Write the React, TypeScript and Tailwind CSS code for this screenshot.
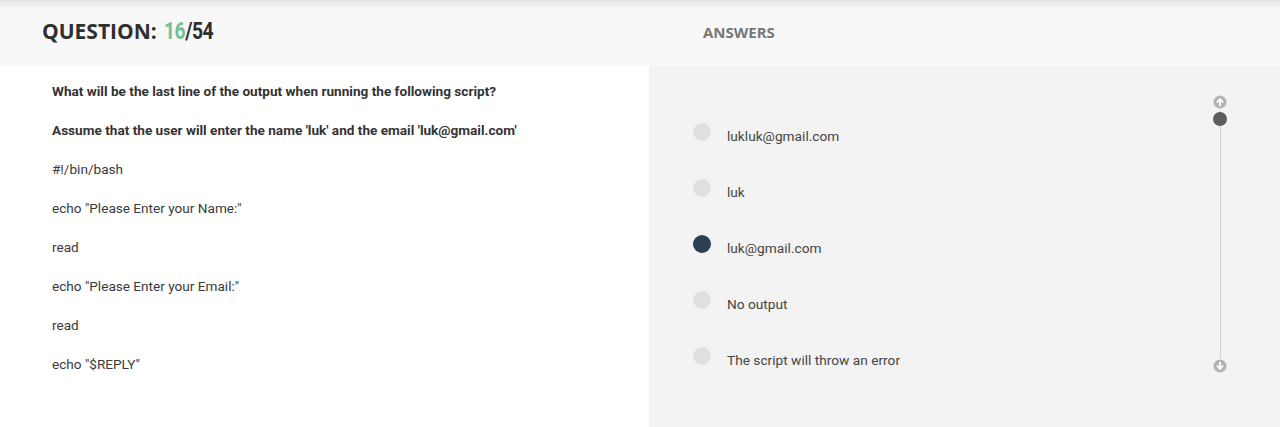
const questionLines = [
  'What will be the last line of the output when running the following script?',
  "Assume that the user will enter the name 'luk' and the email 'luk@gmail.com'",
];

const scriptLines = [
  '#!/bin/bash',
  'echo "Please Enter your Name:"',
  'read',
  'echo "Please Enter your Email:"',
  'read',
  'echo "$REPLY"',
];

const answers = [
  'lukluk@gmail.com',
  'luk',
  'luk@gmail.com',
  'No output',
  'The script will throw an error',
];

const selected = 2;

function ScrollArrow({ down }: { down?: boolean }) {
  return (
    <svg width="14" height="14" viewBox="0 0 14 14">
      <circle cx="7" cy="7" r="6.5" fill="#b3b3b3" />
      {down ? (
        <path d="M7 3.5v6M4.3 7l2.7 2.8L9.7 7" stroke="#fff" strokeWidth="1.8" fill="none" strokeLinecap="round" strokeLinejoin="round" />
      ) : (
        <path d="M7 10.5v-6M4.3 7l2.7-2.8L9.7 7" stroke="#fff" strokeWidth="1.8" fill="none" strokeLinecap="round" strokeLinejoin="round" />
      )}
    </svg>
  );
}

export default function App() {
  return (
    <div className="w-[1280px] h-[427px] overflow-hidden flex flex-col bg-white font-['Roboto',sans-serif]">
      {/* Header */}
      <div className="h-[66px] flex shrink-0 bg-[#f8f8f8] shadow-[inset_0_9px_10px_-7px_rgba(0,0,0,0.12)]">
        <div className="w-[649px] pl-[42px] pt-[17px]">
          <h1 className="flex items-baseline text-[21px] font-bold text-[#2f2f2f] font-['Open_Sans',sans-serif] leading-[28px]">
            <span>QUESTION:</span>
            <span className="ml-[7px] inline-block origin-left scale-x-[0.84] font-['Roboto',sans-serif] font-bold text-[23px] tracking-tight">
              <span className="text-[#72c08f]">16</span>
              <span>/54</span>
            </span>
          </h1>
        </div>
        <div className="flex-1 pl-[54px] pt-[22px]">
          <h2 className="text-[15px] font-bold text-[#777] font-['Open_Sans',sans-serif] leading-5">ANSWERS</h2>
        </div>
      </div>

      {/* Body */}
      <div className="flex flex-1">
        <div className="w-[649px] bg-white pl-[52px] pt-[15px] flex flex-col gap-[19px] text-[13.6px] leading-5 text-[#333]">
          {questionLines.map((line) => (
            <p key={line} className="font-bold">{line}</p>
          ))}
          {scriptLines.map((line, i) => (
            <p key={i} className="text-[#3a3a3a]">{line}</p>
          ))}
        </div>

        <div className="relative flex-1 bg-[#f3f3f3] pl-[44px] pt-[57px]">
          <ul className="flex flex-col gap-[36px]">
            {answers.map((a, i) => (
              <li key={a} className="flex items-start h-5">
                <span
                  className={`w-[18px] h-[18px] rounded-full shrink-0 ${
                    i === selected ? 'bg-[#2c3e50]' : 'bg-[#e0e0e0]'
                  }`}
                />
                <span className="ml-4 mt-[3px] text-[13.7px] leading-5 text-[#444]">{a}</span>
              </li>
            ))}
          </ul>

          {/* Scrollbar */}
          <div className="absolute right-[53px] top-[29px] bottom-[54px] flex flex-col items-center w-[14px]">
            <ScrollArrow />
            <div className="relative flex-1 w-px bg-[#cfcfcf] mt-[1px] mb-[1px]">
              <span className="absolute left-1/2 -translate-x-1/2 top-[2px] w-[14px] h-[14px] rounded-full bg-[#5c5c5c]" />
            </div>
            <ScrollArrow down />
          </div>
        </div>
      </div>
    </div>
  );
}
